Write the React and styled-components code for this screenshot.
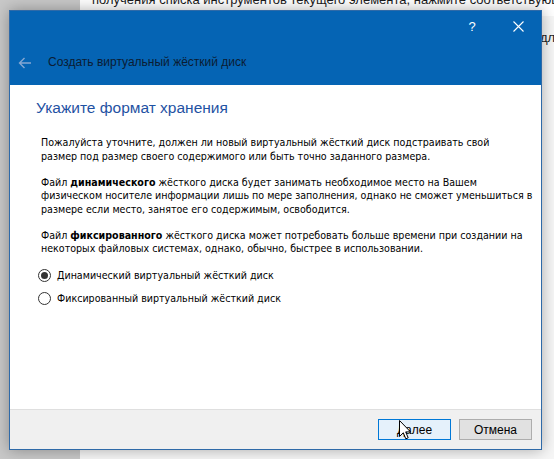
import React from 'react';
import styled, { createGlobalStyle } from 'styled-components';

const GlobalStyle = createGlobalStyle`
  html, body {
    margin: 0;
    padding: 0;
    width: 554px;
    height: 459px;
    overflow: hidden;
  }
  body {
    font-family: "Liberation Sans", Arial, sans-serif;
  }
`;

const Desktop = styled.div`
  position: relative;
  width: 554px;
  height: 459px;
  display: flex;
  overflow: hidden;
`;

const Sidebar = styled.div`
  width: 80px;
  flex-shrink: 0;
  background: #c8c8c8;
`;

const Page = styled.div`
  flex: 1;
  background: #f6f6f6;
  display: flex;
  flex-direction: column;
  overflow: hidden;
`;

const PageLine = styled.div`
  white-space: nowrap;
  font-family: "Liberation Sans", Arial, sans-serif;
  font-size: 13px;
  line-height: 33px;
  color: #1b1b1b;
  padding-left: ${(p) => p.indent || 12}px;
  margin-top: ${(p) => p.shift || 0}px;
  background: ${(p) => (p.white ? '#ffffff' : 'transparent')};
`;

const Window = styled.div`
  position: absolute;
  left: 9px;
  top: 10px;
  width: 533px;
  height: 440px;
  box-sizing: border-box;
  border: 1px solid #2f6aa8;
  background: #ffffff;
  display: flex;
  flex-direction: column;
  box-shadow: 0 0 14px rgba(0, 0, 0, 0.32);
`;

const TitleBar = styled.div`
  background: #0564b4;
  height: 74px;
  flex-shrink: 0;
  display: flex;
  flex-direction: column;
`;

const CaptionRow = styled.div`
  height: 30px;
  display: flex;
  justify-content: flex-end;
`;

const CaptionButton = styled.div`
  width: 46px;
  height: 30px;
  display: flex;
  align-items: center;
  justify-content: center;
  color: #ffffff;
  font-family: "Liberation Sans", Arial, sans-serif;
  font-size: 13px;
`;

const HeaderRow = styled.div`
  flex: 1;
  display: flex;
  align-items: center;
  padding-left: 8px;
  gap: 16px;
`;

const HeaderTitle = styled.div`
  font-family: "Liberation Sans", Arial, sans-serif;
  font-size: 12px;
  color: #0b1c33;
  padding-bottom: 2px;
`;

const Body = styled.div`
  flex: 1;
  padding: 13px 0 0 26px;
  display: flex;
  flex-direction: column;
`;

const Heading = styled.h1`
  margin: 0 0 18px 0;
  font-family: "Liberation Sans", Arial, sans-serif;
  font-weight: normal;
  font-size: 15.5px;
  line-height: 20px;
  color: #1f52a3;
`;

const Text = styled.p`
  margin: 0 0 12.5px 5px;
  font-family: "DejaVu Sans Condensed", "DejaVu Sans", sans-serif;
  font-size: 10.6px;
  line-height: 13.5px;
  color: #000000;
  white-space: nowrap;

  b {
    font-weight: bold;
  }
`;

const Options = styled.div`
  display: flex;
  flex-direction: column;
  gap: 9px;
  margin: 0 0 0 2px;
`;

const Option = styled.label`
  display: flex;
  align-items: center;
  gap: 6px;
  font-family: "DejaVu Sans Condensed", "DejaVu Sans", sans-serif;
  font-size: 10.6px;
  line-height: 14px;
  color: #000000;
`;

const RadioMark = styled.span`
  width: 13px;
  height: 13px;
  box-sizing: border-box;
  border-radius: 50%;
  border: 1px solid #333333;
  background: #ffffff;
  display: flex;
  align-items: center;
  justify-content: center;

  &::after {
    content: '';
    width: 7px;
    height: 7px;
    border-radius: 50%;
    background: ${(p) => (p.checked ? '#333333' : 'transparent')};
  }
`;

const Footer = styled.div`
  height: 40px;
  flex-shrink: 0;
  box-sizing: border-box;
  border-top: 1px solid #dfdfdf;
  background: #f0f0f0;
  display: flex;
  justify-content: flex-end;
  align-items: flex-start;
  padding: 9px 9px 0 0;
  gap: 8px;
`;

const Button = styled.div`
  position: relative;
  width: 73px;
  height: 21px;
  box-sizing: border-box;
  border: 1px solid ${(p) => (p.active ? '#0078d7' : '#adadad')};
  background: ${(p) => (p.active ? '#e5f1fb' : '#e1e1e1')};
  display: flex;
  align-items: center;
  justify-content: center;
  font-family: "Liberation Sans", Arial, sans-serif;
  font-size: 12px;
  color: #000000;
`;

const Cursor = styled.svg`
  position: absolute;
  left: 20px;
  top: 0px;
`;

const BackArrow = () => (
  <svg width="14" height="12" viewBox="0 0 14 12">
    <path d="M13 6H1.5M6.5 1L1.5 6l5 5" fill="none" stroke="#85a7d2" strokeWidth="1.4" />
  </svg>
);

const CloseIcon = () => (
  <svg width="11" height="11" viewBox="0 0 11 11">
    <path d="M0.5 0.5l10 10M10.5 0.5l-10 10" stroke="#ffffff" strokeWidth="1.1" />
  </svg>
);

const App = () => {
  return (
    <>
      <GlobalStyle />
      <Desktop>
        <Sidebar />
        <Page>
          <PageLine white shift={-17}>
            получения списка инструментов текущего элемента, нажмите соответствующую кнопку
          </PageLine>
          <PageLine indent={460} shift={5}>для вызова</PageLine>
        </Page>

        <Window>
          <TitleBar>
            <CaptionRow>
              <CaptionButton>?</CaptionButton>
              <CaptionButton>
                <CloseIcon />
              </CaptionButton>
            </CaptionRow>
            <HeaderRow>
              <BackArrow />
              <HeaderTitle>Создать виртуальный жёсткий диск</HeaderTitle>
            </HeaderRow>
          </TitleBar>

          <Body>
            <Heading>Укажите формат хранения</Heading>
            <Text>
              Пожалуйста уточните, должен ли новый виртуальный жёсткий диск подстраивать свой
              <br />
              размер под размер своего содержимого или быть точно заданного размера.
            </Text>
            <Text>
              Файл <b>динамического</b> жёсткого диска будет занимать необходимое место на Вашем
              <br />
              физическом носителе информации лишь по мере заполнения, однако не сможет уменьшиться в
              <br />
              размере если место, занятое его содержимым, освободится.
            </Text>
            <Text>
              Файл <b>фиксированного</b> жёсткого диска может потребовать больше времени при создании на
              <br />
              некоторых файловых системах, однако, обычно, быстрее в использовании.
            </Text>
            <Options>
              <Option>
                <RadioMark checked />
                Динамический виртуальный жёсткий диск
              </Option>
              <Option>
                <RadioMark />
                Фиксированный виртуальный жёсткий диск
              </Option>
            </Options>
          </Body>

          <Footer>
            <Button active>
              Далее
              <Cursor width="12" height="20" viewBox="0 0 12 20">
                <path
                  d="M0.5 0.5V16.5L4.3 12.8L6.8 18.8L9.2 17.8L6.7 11.9H11.5Z"
                  fill="#ffffff"
                  stroke="#000000"
                  strokeWidth="1"
                  strokeLinejoin="round"
                />
              </Cursor>
            </Button>
            <Button>Отмена</Button>
          </Footer>
        </Window>
      </Desktop>
    </>
  );
};

export default App;
